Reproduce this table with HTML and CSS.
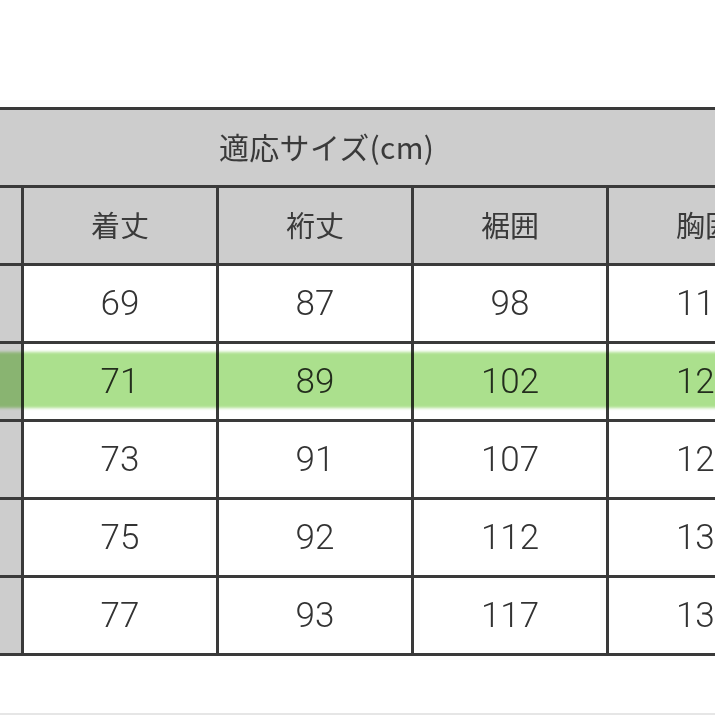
FILE: index.html
```html
<!DOCTYPE html>
<html lang="ja">
<head>
<meta charset="utf-8">
<link rel="stylesheet" href="styles.css">
</head>
<body>
<div class="page">
  <div class="wrap">
    <table class="size-table">
      <colgroup>
        <col class="c-stub"><col class="c-data"><col class="c-data"><col class="c-data"><col class="c-data"><col class="c-data">
      </colgroup>
      <tr class="head">
        <th colspan="6" class="title">適応サイズ(cm)</th>
      </tr>
      <tr class="head">
        <th class="stub"></th>
        <th>着丈</th>
        <th>裄丈</th>
        <th>裾囲</th>
        <th>胸囲</th>
        <th>袖丈</th>
      </tr>
      <tr><th class="stub">S</th><td>69</td><td>87</td><td>98</td><td>118</td><td>58</td></tr>
      <tr><th class="stub">M</th><td>71</td><td>89</td><td>102</td><td>123</td><td>59</td></tr>
      <tr><th class="stub">L</th><td>73</td><td>91</td><td>107</td><td>128</td><td>60</td></tr>
      <tr><th class="stub">XL</th><td>75</td><td>92</td><td>112</td><td>130</td><td>61</td></tr>
      <tr><th class="stub">XXL</th><td>77</td><td>93</td><td>117</td><td>134</td><td>62</td></tr>
    </table>
    <div class="marker"></div>
  </div>
  <div class="bottom-line"></div>
</div>
</body>
</html>
```

FILE: styles.css
```css
html, body {
  margin: 0;
  padding: 0;
  background: #ffffff;
}

.page {
  width: 715px;
  height: 715px;
  overflow: hidden;
  position: relative;
  display: flex;
  flex-direction: column;
}

.wrap {
  position: relative;
  margin-top: 107px;
  width: 715px;
  overflow: hidden;
}

.size-table {
  border-collapse: collapse;
  table-layout: fixed;
  width: 1075px;
  margin-left: -79px;
  color: #333333;
}

.c-stub { width: 100px; }
.c-data { width: 195px; }

.size-table th,
.size-table td {
  border: 3px solid #3a3a3a;
  height: 75px;
  padding: 0;
  text-align: center;
  vertical-align: middle;
}

.size-table th {
  background: #cdcdcd;
  font-family: "Noto Sans CJK JP", sans-serif;
  font-weight: 400;
  font-size: 29px;
  color: #3a3a3a;
  padding-bottom: 4px;
  height: 71px;
}

.size-table th.stub {
  color: transparent;
}

.size-table th.title {
  text-align: left;
  padding-left: 295px;
  font-size: 30px;
  letter-spacing: 0.3px;
}

.size-table td {
  background: #ffffff;
  font-family: Roboto, "Noto Sans", sans-serif;
  font-weight: 300;
  font-size: 35px;
  color: #333333;
}

.marker {
  position: absolute;
  left: -10px;
  right: -10px;
  top: 245px;
  height: 56px;
  background: #abe08d;
  mix-blend-mode: multiply;
  filter: blur(1.5px);
  pointer-events: none;
}

.bottom-line {
  margin-top: auto;
  height: 2px;
  background: #e6e6e6;
}
```
